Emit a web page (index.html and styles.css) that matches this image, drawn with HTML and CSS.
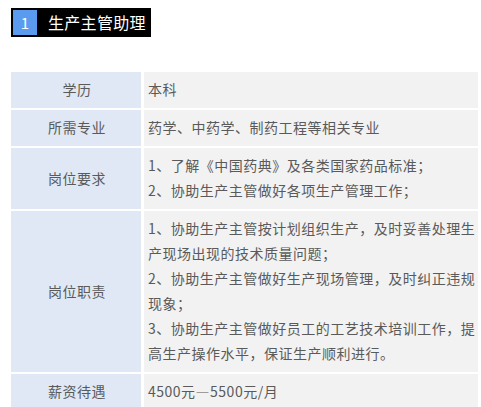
FILE: index.html
```html
<!DOCTYPE html>
<html lang="zh-CN">
<head>
    <meta charset="UTF-8">
    <meta name="viewport" content="width=device-width, initial-scale=1.0">
    <title>招聘职位 - 生产主管助理</title>
    <link rel="stylesheet" href="styles.css">
</head>
<body>

<main class="job">
    <h2 class="job-title">
        <span class="job-num">1</span>
        <span class="job-name">生产主管助理</span>
    </h2>

    <table class="job-table">
        <tr>
            <th>学历</th>
            <td>本科</td>
        </tr>
        <tr>
            <th>所需专业</th>
            <td>药学、中药学、制药工程等相关专业</td>
        </tr>
        <tr>
            <th>岗位要求</th>
            <td>
                1、了解《中国药典》及各类国家药品标准；<br>
                2、协助生产主管做好各项生产管理工作；
            </td>
        </tr>
        <tr>
            <th>岗位职责</th>
            <td>
                1、协助生产主管按计划组织生产，及时妥善处理生产现场出现的技术质量问题；<br>
                2、协助生产主管做好生产现场管理，及时纠正违规现象；<br>
                3、协助生产主管做好员工的工艺技术培训工作，提高生产操作水平，保证生产顺利进行。
            </td>
        </tr>
        <tr>
            <th>薪资待遇</th>
            <td>4500元—5500元/月</td>
        </tr>
    </table>
</main>

</body>
</html>
```

FILE: styles.css
```css
:root {
    --text-color: #5a5a5a;
    --label-bg: #dfe8f4;
    --value-bg: #f2f2f2;
    --badge-color: #5b9bef;
    --font-cjk: 'Noto Sans CJK SC', 'Microsoft YaHei', sans-serif;
}

/* --- Resets --- */
* { margin: 0; padding: 0; box-sizing: border-box; }
body {
    background: #ffffff;
    color: var(--text-color);
    font-family: var(--font-cjk);
    font-size: 14px;
}

.job {
    padding: 8px 1px 0 8px;
}

/* --- Title bar --- */
.job-title {
    display: inline-flex;
    align-items: center;
    margin-left: 3px;
    padding: 2px 5px 2px 2px;
    background: #000000;
    color: #ffffff;
    font-size: 16px;
    font-weight: normal;
    line-height: 25px;
    letter-spacing: 0.3px;
}
.job-num {
    width: 24px;
    height: 25px;
    background: var(--badge-color);
    text-align: center;
    font-size: 15px;
}
.job-name {
    margin-left: 11px;
}

/* --- Info table --- */
.job-table {
    width: 473px;
    margin-top: 33px;
    border-collapse: separate;
    border-spacing: 3px 2px;
    line-height: 25px;
    letter-spacing: 0.5px;
}
.job-table th,
.job-table td {
    padding: 5px 2px 6px 4px;
    vertical-align: middle;
}
.job-table th {
    width: 130px;
    background: var(--label-bg);
    font-weight: normal;
    text-align: center;
}
.job-table td {
    background: var(--value-bg);
    text-align: left;
}
```
